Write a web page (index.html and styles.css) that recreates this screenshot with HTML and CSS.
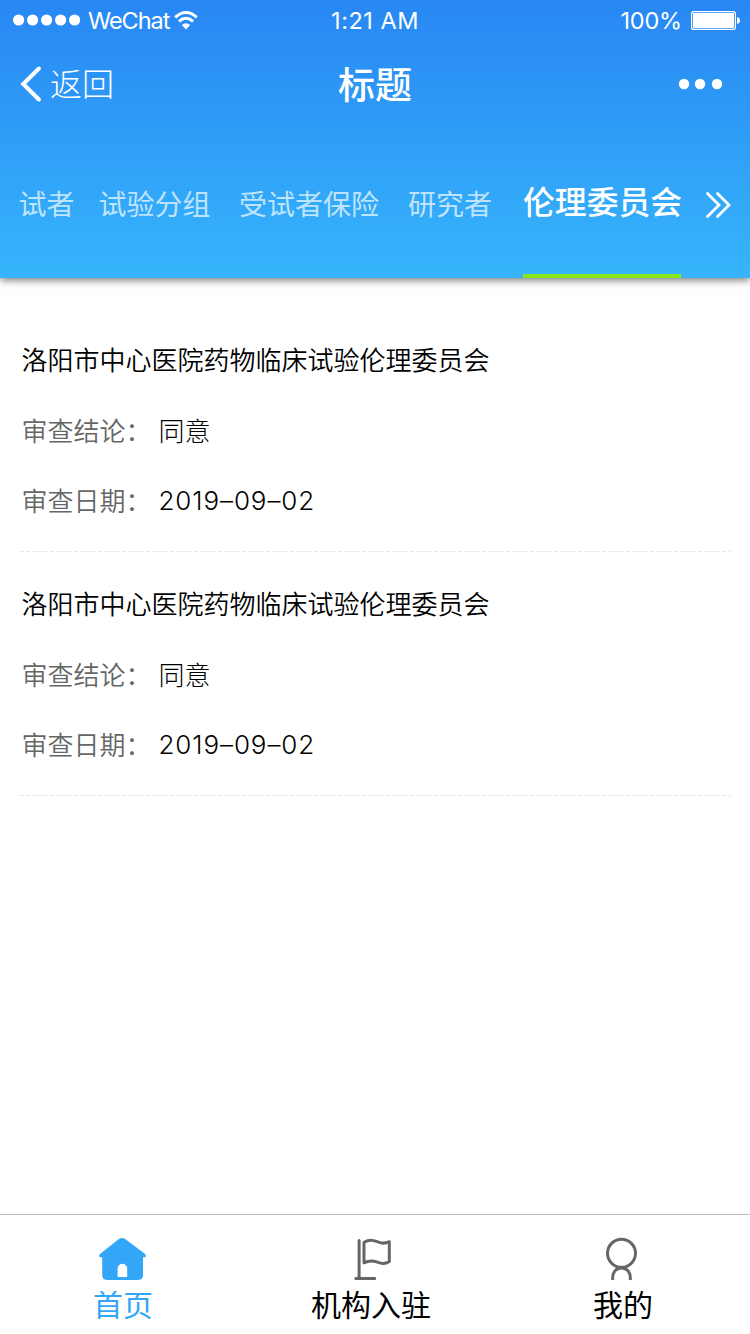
FILE: index.html
```html
<!DOCTYPE html>
<html lang="zh-CN">
<head>
<meta charset="utf-8">
<title>标题</title>
<link rel="stylesheet" href="styles.css">
</head>
<body>
<div class="screen">
  <header class="header">
    <div class="status">
      <div class="carrier">
        <svg class="signal" width="68" height="12" viewBox="0 0 68 12" fill="#fff"><circle cx="5.6" cy="6" r="5.6"/><circle cx="19.6" cy="6" r="5.6"/><circle cx="33.6" cy="6" r="5.6"/><circle cx="47.6" cy="6" r="5.6"/><circle cx="61.6" cy="6" r="5.6"/></svg>
        <span class="carrier-name">WeChat</span>
        <svg class="wifi" width="24" height="19" viewBox="0 0 24 19" fill="none" stroke="#fff" stroke-width="3"><path d="M1.2 6.3Q12-3.2 22.8 6.3"/><path d="M4.9 10.3Q12 4.2 19.1 10.3"/><path d="M7.8 14Q12 10.6 16.2 14L12 18.4Z" fill="#fff" stroke="none"/></svg>
      </div>
      <span class="clock">1:21 AM</span>
      <div class="power">
        <span class="percent">100%</span>
        <svg width="49" height="19" viewBox="0 0 49 19"><rect x=".6" y=".6" width="43.8" height="17.8" rx="2.2" fill="none" stroke="#fff" stroke-width="1.2"/><rect x="2" y="2" width="41" height="15" rx="1" fill="#fff"/><path d="M46 6Q49 6.5 49 9.5T46 13Z" fill="#fff"/></svg>
      </div>
    </div>
    <nav class="navbar">
      <div class="back">
        <svg width="21" height="36" viewBox="0 0 21 36" fill="none" stroke="#fff" stroke-width="4" stroke-linecap="round"><path d="M18.9 2.5L3.2 18L18.9 33.5"/></svg>
        <span class="back-label">返回</span>
      </div>
      <h1 class="title">标题</h1>
      <svg class="more" width="44" height="12" viewBox="0 0 44 12" fill="#fff"><circle cx="6" cy="6" r="5.2"/><circle cx="22" cy="6" r="5.2"/><circle cx="39" cy="6" r="5.2"/></svg>
    </nav>
    <div class="tabs">
      <span class="tab">试者</span>
      <span class="tab tab-group">试验分组</span>
      <span class="tab tab-insurance">受试者保险</span>
      <span class="tab tab-researcher">研究者</span>
      <span class="tab tab-active">伦理委员会</span>
      <svg class="expand" width="25" height="26" viewBox="0 0 25 26" fill="none" stroke="#fff" stroke-width="2.8" stroke-linecap="round"><path d="M1.500 1.500L13 13L1.500 24.500M11.500 1.500L23 13L11.500 24.500"/></svg>
    </div>
  </header>
  <main class="list">
    <section class="item">
      <h2 class="name">洛阳市中心医院药物临床试验伦理委员会</h2>
      <div class="row"><span class="label">审查结论：</span><span class="value">同意</span></div>
      <div class="row"><span class="label">审查日期：</span><span class="value date">2019–09–02</span></div>
    </section>
    <section class="item">
      <h2 class="name">洛阳市中心医院药物临床试验伦理委员会</h2>
      <div class="row"><span class="label">审查结论：</span><span class="value">同意</span></div>
      <div class="row"><span class="label">审查日期：</span><span class="value date">2019–09–02</span></div>
    </section>
  </main>
  <footer class="tabbar">
    <div class="entry entry-active">
      <svg width="50" height="44" viewBox="0 0 50 44"><path fill="#33a6f8" fill-rule="evenodd" d="M21.500 1.600Q24 .2 26.500 1.600L46.800 16.800Q48.500 18.500 47.500 19.700Q46.700 20.600 45 20.200V38Q45 42.900 40.200 42.900H9Q4.200 42.900 4.200 38V20.200Q2.500 20.600 1.600 19.700Q.5 18.400 2.300 16.800ZM19.600 40H29.200V31.600A4.800 4.800 0 0 0 19.600 31.600Z"/></svg>
      <span class="entry-label">首页</span>
    </div>
    <div class="entry entry-join">
      <svg width="38" height="44" viewBox="0 0 38 44" fill="none" stroke="#666" stroke-width="3" stroke-linecap="round" stroke-linejoin="round"><path d="M7.800 3.500V40M4.500 41.500H23.500M12.700 5.200C19 1.800 22 3.300 27 5Q32 7.400 38 4.700V24.500C33.200 27.700 29.500 26.500 24.500 24.700Q19 22.700 12.700 25.800Z" transform="translate(-.7 0)"/></svg>
      <span class="entry-label">机构入驻</span>
    </div>
    <div class="entry entry-mine">
      <svg width="34" height="44" viewBox="0 0 34 44" fill="none" stroke="#666" stroke-width="3"><circle cx="15.500" cy="16.300" r="14"/><path d="M6.800 43C5.900 35.500 10 31 15.500 31S25.100 35.500 24.200 43"/></svg>
      <span class="entry-label">我的</span>
    </div>
  </footer>
</div>
</body>
</html>
```
FILE: styles.css
```css
* { box-sizing: border-box; }
body {
  margin: 0;
  background: #fff;
  font-family: "Noto Sans CJK SC", sans-serif;
}
svg { display: block; flex: none; overflow: visible; }
h1, h2 { margin: 0; }
.screen {
  display: flex;
  flex-direction: column;
  width: 750px;
  height: 1334px;
  overflow: hidden;
}
.header {
  flex: none;
  height: 278px;
  color: #fff;
  background: linear-gradient(#2887f3, #36b5fb);
  box-shadow: 0 2px 8px rgba(0, 0, 0, .55);
}
.status {
  display: grid;
  grid-template-columns: 1fr auto 1fr;
  align-items: center;
  height: 40px;
  padding: 0 10px 0 13px;
  font: 400 23.5px/38px Inter, sans-serif;
}
.carrier-name, .clock, .percent { padding-top: 2px; }
.carrier { display: flex; align-items: center; }
.carrier-name { margin-left: 7px; letter-spacing: -1.05px; }
.wifi { margin-left: 5px; }
.clock { margin-right: 3px; letter-spacing: .5px; }
.power { display: flex; align-items: center; justify-content: flex-end; gap: 9px; }
.percent { letter-spacing: -.2px; }
.navbar {
  display: grid;
  grid-template-columns: 1fr auto 1fr;
  align-items: center;
  height: 88px;
  padding: 0 28px 0 20px;
}
.back { display: flex; align-items: center; gap: 9px; }
.back-label { font-size: 32px; line-height: 84px; font-weight: 300; padding-bottom: 4px; }
.title { font-size: 37px; line-height: 84px; font-weight: 500; padding-bottom: 2px; margin-left: 8px; }
.more { justify-self: end; }
.tabs {
  display: flex;
  height: 150px;
  padding-left: 18.5px;
  font-size: 28px;
  line-height: 150px;
  white-space: nowrap;
}
.tab { color: rgba(255, 255, 255, .7); }
.tab-group { margin-left: 24px; }
.tab-insurance { margin-left: 28.5px; }
.tab-researcher { margin-left: 29px; }
.tab-active {
  width: 158px;
  margin-left: 31px;
  border-bottom: 4px solid #87e71b;
  color: #fff;
  font-size: 31.8px;
  font-weight: 500;
  line-height: 145px;
}
.expand { margin: 64px 0 0 25px; }
.list { flex: 1; padding: 35px 20px 0; }
.item {
  height: 244px;
  padding: 22px 2px 0 1.5px;
  background: repeating-linear-gradient(90deg, #e8e8e8 0 4px, transparent 4px 6px) bottom 5px left / 100% 1px no-repeat;
  font-size: 26px;
}
.name { font-size: 26px; font-weight: 350; line-height: 48px; color: #000; }
.row { display: flex; margin-top: 22px; line-height: 50px; font-weight: 300; }
.row + .row { margin-top: 20px; }
.label { width: 137px; color: #666; font-weight: 350; }
.value { color: #000; }
.date { padding-top: 1px; font-family: Inter, "Noto Sans CJK SC", sans-serif; font-weight: 300; letter-spacing: .9px; }
.tabbar {
  flex: none;
  display: flex;
  justify-content: space-between;
  height: 120px;
  padding: 22px 97px 0 93px;
  border-top: 1px solid #bfbfbf;
}
.entry { display: flex; flex-direction: column; align-items: center; color: #000; }
.entry-label { font-size: 30px; line-height: 44px; }
.entry-active { color: #33a6f8; }
.entry-join { margin-right: 4px; }
```
